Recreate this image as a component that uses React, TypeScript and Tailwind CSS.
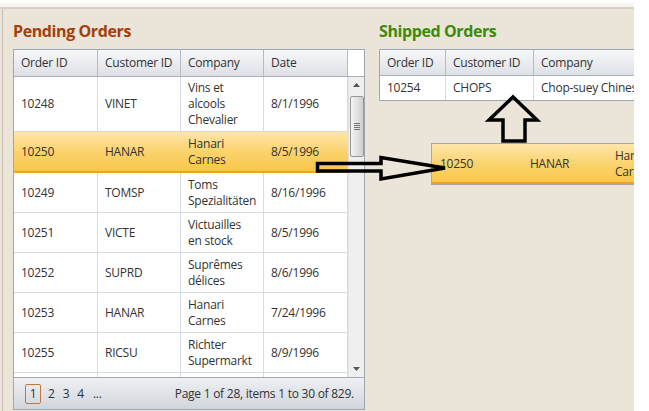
import React from "react";

interface Order {
  id: string;
  customer: string;
  company: string[];
  date: string;
}

const pendingOrders: Order[] = [
  { id: "10248", customer: "VINET", company: ["Vins et", "alcools", "Chevalier"], date: "8/1/1996" },
  { id: "10250", customer: "HANAR", company: ["Hanari", "Carnes"], date: "8/5/1996" },
  { id: "10249", customer: "TOMSP", company: ["Toms", "Spezialitäten"], date: "8/16/1996" },
  { id: "10251", customer: "VICTE", company: ["Victuailles", "en stock"], date: "8/5/1996" },
  { id: "10252", customer: "SUPRD", company: ["Suprêmes", "délices"], date: "8/6/1996" },
  { id: "10253", customer: "HANAR", company: ["Hanari", "Carnes"], date: "7/24/1996" },
  { id: "10255", customer: "RICSU", company: ["Richter", "Supermarkt"], date: "8/9/1996" },
];

const selectedId = "10250";
const widths = ["w-[84px]", "w-[83px]", "w-[83px]", "w-[84px]"];

function ScrollBar() {
  return (
    <div className="w-[17px] bg-[#efefef] border-l border-[#e2e2e2] flex flex-col items-center">
      <div className="h-[16px] flex items-center justify-center">
        <svg width="7" height="4" viewBox="0 0 7 4">
          <path d="M0 4 L3.5 0 L7 4 Z" fill="#555" />
        </svg>
      </div>
      <div className="mt-[3px] h-[61px] w-[14px] rounded-[2px] border border-[#979797] bg-linear-to-r from-[#f4f4f4] via-[#e2e2e2] to-[#cfcfcf] flex flex-col items-center justify-center gap-[1px]">
        <div className="w-[6px] h-[1px] bg-[#777]" />
        <div className="w-[6px] h-[1px] bg-[#777]" />
        <div className="w-[6px] h-[1px] bg-[#777]" />
        <div className="w-[6px] h-[1px] bg-[#777]" />
      </div>
      <div className="flex-1" />
      <div className="h-[16px] flex items-center justify-center">
        <svg width="7" height="4" viewBox="0 0 7 4">
          <path d="M0 0 L3.5 4 L7 0 Z" fill="#555" />
        </svg>
      </div>
    </div>
  );
}

function PendingGrid() {
  const headers = ["Order ID", "Customer ID", "Company", "Date"];

  return (
    <div className="w-[352px] border border-[#9ea6b3] bg-white flex flex-col">
      {/* Header */}
      <div className="h-[27px] flex border-b border-[#a9b0bb]">
        {headers.map((h, i) => (
          <div
            key={h}
            className={`${widths[i]} h-full pl-[7px] flex items-center border-r border-[#b6bcc6] bg-linear-to-b from-[#f7f8fa] to-[#dde0e5]`}
          >
            {h}
          </div>
        ))}
        <div className="flex-1 bg-white" />
      </div>

      {/* Rows + scrollbar */}
      <div className="h-[300px] flex overflow-hidden">
        <div className="flex-1 flex flex-col">
          {pendingOrders.map((o, idx) => {
            const selected = o.id === selectedId;
            const cellBorder = selected ? "border-r border-transparent" : "border-r border-[#d6dbe3]";
            return (
              <div
                key={o.id + idx}
                className={`flex shrink-0 ${idx === 0 ? "h-[55px]" : selected ? "h-[41px]" : "h-[40px]"} ${
                  selected
                    ? "bg-linear-to-b from-[#fee6aa] via-[#fbd36c] to-[#f9c748] border-b-2 border-[#f3a026]"
                    : "border-b border-[#d6dbe3]"
                }`}
              >
                <div className={`${widths[0]} pl-[7px] flex items-center ${cellBorder}`}>{o.id}</div>
                <div className={`${widths[1]} pl-[7px] flex items-center ${cellBorder}`}>{o.customer}</div>
                <div className={`${widths[2]} pl-[7px] flex flex-col justify-center leading-[16px] ${cellBorder}`}>
                  {o.company.map((line) => (
                    <span key={line}>{line}</span>
                  ))}
                </div>
                <div className={`${widths[3]} pl-[7px] flex items-center ${cellBorder}`}>{o.date}</div>
              </div>
            );
          })}
          {/* next row peeking in at the bottom */}
          <div className="flex shrink-0 h-[40px]">
            {widths.map((w) => (
              <div key={w + "x"} className={`${w} border-r border-[#d6dbe3]`} />
            ))}
          </div>
        </div>
        <ScrollBar />
      </div>

      {/* Pager */}
      <div className="h-[32px] border-t border-[#a4aab4] bg-linear-to-b from-[#eef0f3] to-[#d2d6db] flex items-center justify-between pl-[11px] pr-[10px] leading-[16px] text-[#24324a]">
        <div className="flex items-center gap-[8px]">
          <span className="w-[16px] h-[20px] flex items-center justify-center border border-[#c5763a] rounded-[2px]">1</span>
          <span className="-ml-[1px]">2</span>
          <span>3</span>
          <span>4</span>
          <span className="ml-[1px]">...</span>
        </div>
        <span className="text-[#333]">Page 1 of 28, items 1 to 30 of 829.</span>
      </div>
    </div>
  );
}

function ShippedGrid() {
  return (
    <div className="w-[300px] border border-[#9ea6b3] bg-white flex flex-col">
      <div className="h-[26px] flex border-b border-[#a9b0bb] bg-linear-to-b from-[#f7f8fa] to-[#dde0e5]">
        <div className="w-[66px] pl-[7px] flex items-center border-r border-[#b6bcc6]">Order ID</div>
        <div className="w-[88px] pl-[7px] flex items-center border-r border-[#b6bcc6]">Customer ID</div>
        <div className="flex-1 pl-[7px] flex items-center whitespace-nowrap">Company</div>
      </div>
      <div className="h-[24px] flex">
        <div className="w-[66px] pl-[7px] flex items-center border-r border-[#d6dbe3]">10254</div>
        <div className="w-[88px] pl-[7px] flex items-center border-r border-[#d6dbe3]">CHOPS</div>
        <div className="flex-1 pl-[7px] flex items-center whitespace-nowrap">Chop-suey Chinese</div>
      </div>
    </div>
  );
}

export default function App() {
  return (
    <div className="w-[649px] h-[411px] bg-white overflow-hidden font-['Segoe_UI','Open_Sans',sans-serif] text-[12px] tracking-[-0.25px] text-[#333]">
      <div className="relative w-[634px] h-[411px] overflow-hidden flex flex-col">
        {/* top strip */}
        <div className="h-[7px] bg-linear-to-b from-white to-[#f4f1ec]" />
        <div className="h-[2px] bg-[#d8d0c3]" />

        {/* beige work area */}
        <div className="flex-1 bg-[#ebe4d8] pl-[2px]">
          <div className="h-full border-l border-[#c8bfb0] pl-[10px] pt-[12px] flex gap-[14px]">
            <div className="flex flex-col">
              <h2 className="h-[20px] mb-[8px] text-[16px] font-bold leading-[20px] tracking-[-0.4px] text-[#a2400c]">Pending Orders</h2>
              <PendingGrid />
            </div>
            <div className="flex flex-col">
              <h2 className="h-[20px] mb-[8px] text-[16px] font-bold leading-[20px] tracking-[-0.4px] text-[#3d8a0b]">Shipped Orders</h2>
              <ShippedGrid />
            </div>
          </div>
        </div>

        {/* dragged row */}
        <div className="absolute left-[431px] top-[143px] w-[240px] h-[42px] border border-[#a8a8a8] bg-linear-to-b from-[#fee6aa] via-[#fbd36c] to-[#f9c748] flex">
          <div className="w-[89px] pl-[8px] flex items-center">10250</div>
          <div className="w-[87px] pl-[9px] flex items-center">HANAR</div>
          <div className="flex-1 pl-[7px] flex flex-col justify-center leading-[16px]">
            <span>Hanari</span>
            <span>Carnes</span>
          </div>
          <div className="absolute left-0 right-0 bottom-0 h-[2px] bg-[#f3a026]" />
        </div>

        {/* arrows */}
        <svg className="absolute left-0 top-0 pointer-events-none" width="634" height="411" viewBox="0 0 634 411">
          <polygon
            points="513,97 489,120 503,120 503,141 525,141 525,120 537,120"
            fill="none"
            stroke="#000"
            strokeWidth="3.5"
            strokeLinejoin="miter"
          />
          <polygon
            points="317.5,163.5 381,163.5 381,157.5 445,168 381,179 381,171 317.5,171"
            fill="none"
            stroke="#000"
            strokeWidth="3.5"
            strokeLinejoin="miter"
          />
        </svg>
      </div>
    </div>
  );
}
